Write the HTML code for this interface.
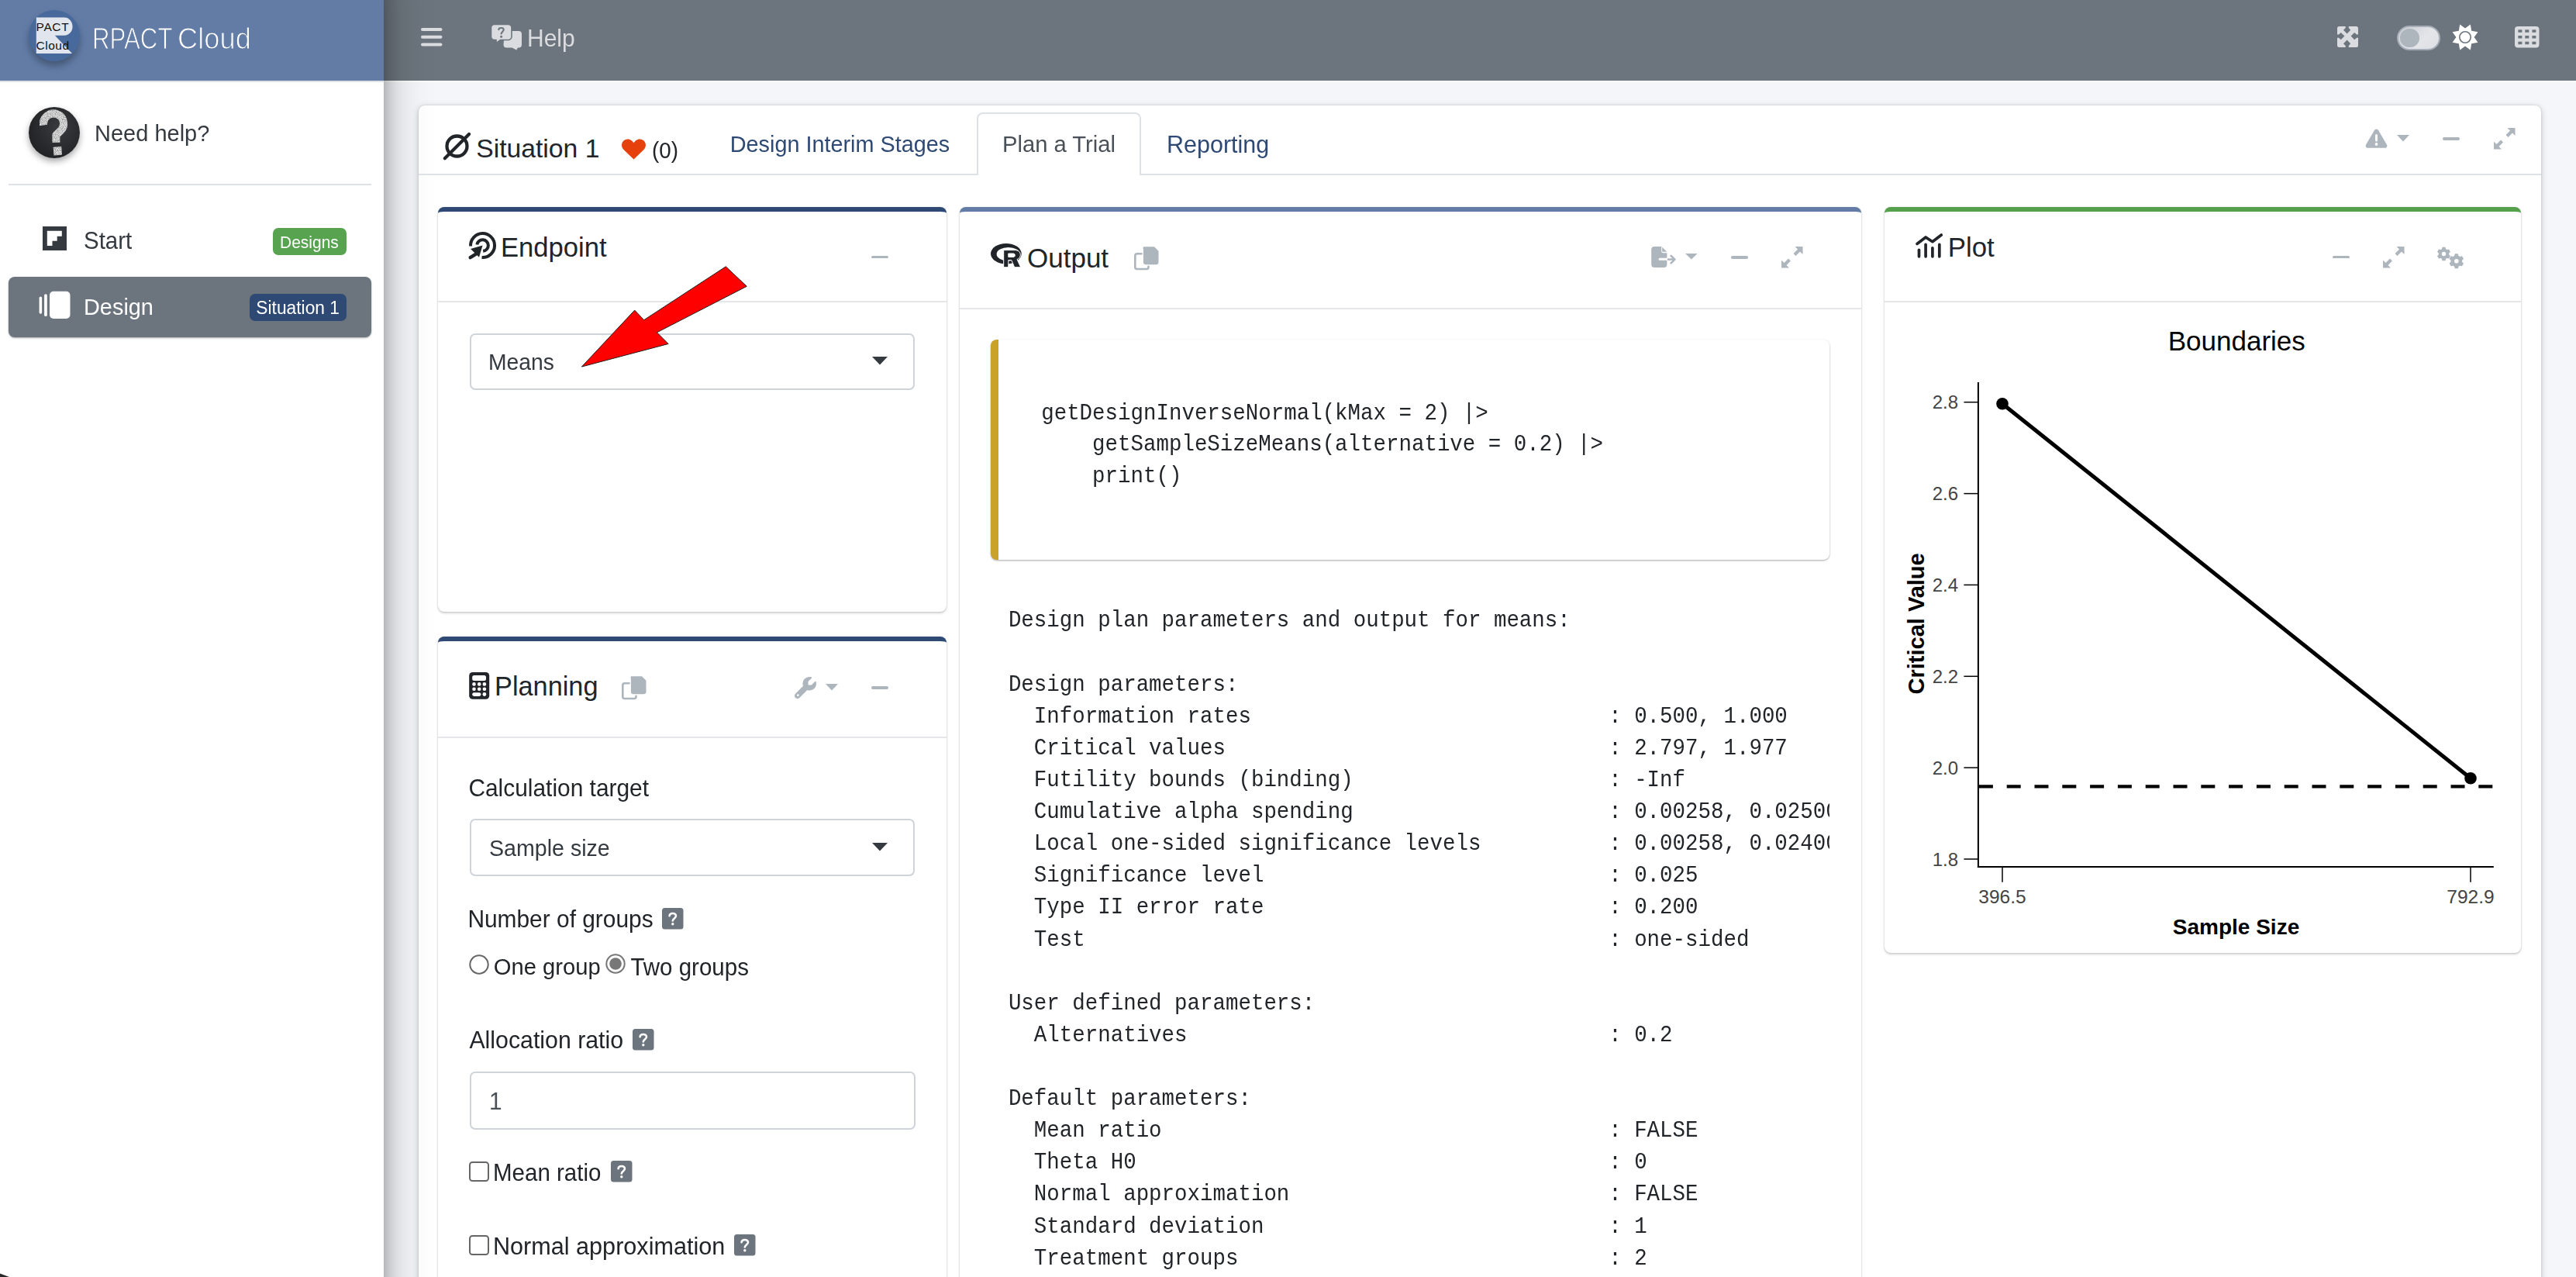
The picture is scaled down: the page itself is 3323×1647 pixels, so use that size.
<!DOCTYPE html>
<html><head><meta charset="utf-8"><title>RPACT Cloud</title>
<style>
html,body{margin:0;padding:0;width:3323px;height:1647px;overflow:hidden;background:#f4f6f9}
body{position:relative;font-family:"Liberation Sans", sans-serif}
.t{position:absolute;white-space:nowrap}
.r{position:absolute}
.s{position:absolute;overflow:visible}
</style></head><body>
<div class="r" style="left:0px;top:0px;width:3323px;height:1647px;background:#f4f6f9"></div>
<div class="r" style="left:495px;top:0px;width:2828px;height:104px;background:#6c757d"></div>
<div class="r" style="left:495px;top:104px;width:2828px;height:2px;background:#fbfbfc"></div>
<div class="r" style="left:540px;top:136px;width:2738px;height:1600px;background:#fff;border-radius:8px;box-shadow:0 0 2px rgba(0,0,0,.16),0 2px 8px rgba(0,0,0,.22)"></div>
<div class="r" style="left:0px;top:-60px;width:495px;height:1767px;background:#fff;box-shadow:0 28px 56px rgba(0,0,0,.3),0 20px 20px rgba(0,0,0,.24)"></div>
<div class="r" style="left:0px;top:0px;width:495px;height:104px;background:#627ca6"></div>
<div class="r" style="left:0px;top:104px;width:495px;height:2px;background:#dfe3e8"></div>
<div class="r" style="left:37px;top:13px;width:66px;height:66px;border-radius:50%;background:#48699b;box-shadow:0 6px 10px rgba(0,0,0,.3)"></div>
<svg class="s" style="left:37px;top:13px;" width="66" height="66" viewBox="0 0 66 66"><path d="M9.8 9.6 H46 A10.5 11.5 0 0 1 46 32.7 H33.8 L56 56.1 H9.8 Z" fill="#e1e5ee"/><text x="9.6" y="27.2" font-family="Liberation Sans" font-size="15.5" fill="#111" textLength="42">PACT</text><text x="9.6" y="50.6" font-family="Liberation Sans" font-size="15.5" fill="#111" textLength="42.5">Cloud</text></svg>
<div class="t" style="left:118.6px;top:35.1px;font-size:33px;line-height:33px;color:#ffffff;font-weight:normal;transform:scale(0.946,1.18);transform-origin:0 27.9px;-webkit-text-stroke:0.9px #627ca6;">RPACT</div>
<div class="t" style="left:229.2px;top:35.1px;font-size:33px;line-height:33px;color:#ffffff;font-weight:normal;transform:scale(1.1,1.18);transform-origin:0 27.9px;-webkit-text-stroke:0.9px #627ca6;">Cloud</div>
<div class="r" style="left:37px;top:138px;width:66px;height:66px;border-radius:50%;background:radial-gradient(circle at 60% 40%,#3a3b3e,#232426 70%);box-shadow:0 4px 8px rgba(0,0,0,.35)"></div>
<svg class="s" style="left:37px;top:138px;" width="66" height="66" viewBox="0 0 66 66"><defs><filter id="chalk" filterUnits="userSpaceOnUse" x="0" y="0" width="66" height="66"><feTurbulence type="fractalNoise" baseFrequency="0.9" numOctaves="2" seed="3" result="n"/><feColorMatrix in="n" type="matrix" values="0 0 0 0 0  0 0 0 0 0  0 0 0 0 0  0 0 0 -1.1 1.4" result="a"/><feComposite in="SourceGraphic" in2="a" operator="in"/></filter></defs><g filter="url(#chalk)"><path d="M19.2 23.5 A13 13 0 1 1 40.4 31.4 L35.4 36.2 V45.7" fill="none" stroke="#e2e2e2" stroke-width="10" stroke-linejoin="round"/><rect x="32" y="51.3" width="10.6" height="10.9" fill="#e2e2e2" transform="rotate(-4 37 56.7)"/></g></svg>
<div class="t" style="left:122.0px;top:157.9px;font-size:29px;line-height:29px;color:#343a40;font-weight:normal;transform:scaleY(1.04);transform-origin:0 24.55px;">Need help?</div>
<div class="r" style="left:11px;top:237px;width:468px;height:2px;background:#dee2e6"></div>
<svg class="s" style="left:55px;top:292px;" width="31" height="31" viewBox="0 0 31 31"><rect width="31" height="31" fill="#343a40"/><path d="M5.8 5.7 H24.8 V12.7 H18.7 V18.8 H12.5 V25 H5.8 Z" fill="#fff"/></svg>
<div class="t" style="left:108.0px;top:296.0px;font-size:29.5px;line-height:29.5px;color:#343a40;font-weight:normal;transform:scaleY(1.04);transform-origin:0 24.98px;">Start</div>
<div class="r" style="left:352px;top:294px;width:95px;height:35px;background:#57a350;border-radius:7px"></div>
<div class="t" style="left:361.0px;top:302.2px;font-size:21px;line-height:21px;color:#fff;font-weight:normal;transform:scaleY(1.04);transform-origin:0 17.78px;">Designs</div>
<div class="r" style="left:11px;top:357px;width:468px;height:78px;background:#6c757d;border-radius:8px;box-shadow:0 1px 3px rgba(0,0,0,.12),0 1px 2px rgba(0,0,0,.24)"></div>
<svg class="s" style="left:50px;top:375px;" width="41" height="37" viewBox="0 0 41 37"><rect x="0.6" y="7.4" width="3.5" height="22.4" rx="1.75" fill="#fff"/><rect x="7.1" y="4.2" width="3.7" height="28.8" rx="1.85" fill="#fff"/><rect x="14" y="0.8" width="26.5" height="35.2" rx="5" fill="#fff"/></svg>
<div class="t" style="left:108.0px;top:381.5px;font-size:28.9px;line-height:28.9px;color:#fff;font-weight:normal;transform:scaleY(1.04);transform-origin:0 24.47px;">Design</div>
<div class="r" style="left:322px;top:379px;width:125px;height:35px;background:#2e4a74;border-radius:7px"></div>
<div class="t" style="left:330.3px;top:385.7px;font-size:22.8px;line-height:22.8px;color:#fff;font-weight:normal;transform:scaleY(1.04);transform-origin:0 19.30px;">Situation 1</div>
<svg class="s" style="left:543px;top:36px;" width="28" height="24" viewBox="0 0 28 24"><rect x="0" y="0" width="27.5" height="4" rx="2" fill="#dadcdf"/><rect x="0" y="9.7" width="27.5" height="4" rx="2" fill="#dadcdf"/><rect x="0" y="19.6" width="27.5" height="4" rx="2" fill="#dadcdf"/></svg>
<svg class="s" style="left:632px;top:30px;" width="44" height="36" viewBox="0 0 44 36"><path d="M19 10 H37 A4 4 0 0 1 41 14 V27.5 A4 4 0 0 1 37 31.5 H36 L34.2 34.5 L28.5 31.5 H21.5 A4 4 0 0 1 17.5 27.5 Z" fill="#dadcdf"/><path d="M6 1.5 H23.5 A4.5 4.5 0 0 1 28 6 V17 A4.5 4.5 0 0 1 23.5 21.5 H13.5 L8 25.7 L8 21.5 H6 A4.5 4.5 0 0 1 1.5 17 V6 A4.5 4.5 0 0 1 6 1.5 Z" fill="#dadcdf" stroke="#6c757d" stroke-width="1.6"/><path d="M11.3 8.2 C11.5 5.5 17.5 5 17.7 8.3 C17.8 10.5 15 10.8 14.6 13.5" fill="none" stroke="#6c757d" stroke-width="2.1" stroke-linecap="round"/><circle cx="14.6" cy="17.3" r="1.5" fill="#6c757d"/></svg>
<div class="t" style="left:680.0px;top:34.6px;font-size:30px;line-height:30px;color:#dadcdf;font-weight:normal;transform:scaleY(1.04);transform-origin:0 25.40px;">Help</div>
<svg class="s" style="left:3014px;top:33px;" width="29" height="29" viewBox="0 0 29 29"><path d="M1 3 A2.5 2.5 0 0 1 3.5 0.9 H11.7 V2.9 L9 5.7 L13.6 10.5 L18.2 5.7 L15.8 2.9 V0.9 H25.5 A2.5 2.5 0 0 1 28 3.4 V11.6 H26 L23.2 9 L18.6 13.6 L23.2 18.2 L26 15.8 H28 V25.5 A2.5 2.5 0 0 1 25.5 28 H15.8 V26 L18.2 23.2 L13.6 18.6 L9 23.2 L11.7 26 V28 H3.5 A2.5 2.5 0 0 1 1 25.5 V15.8 H3 L5.7 18.2 L10.5 13.6 L5.7 9 L3 11.6 H1 Z" fill="#dadcdf"/></svg>
<div class="r" style="left:3092px;top:33px;width:52px;height:28px;border-radius:16px;border:2px solid #a7aeb8;background:linear-gradient(135deg,#c9ccd1,#e3e5e9 60%,#dcdfe3)"></div>
<div class="r" style="left:3096px;top:36.5px;width:24.5px;height:24.5px;border-radius:50%;background:#adb5bd"></div>
<svg class="s" style="left:3163.5px;top:31.5px;" width="32" height="32" viewBox="0 0 32 32"><polygon points="22.81,-0.45 24.20,7.80 32.45,9.19 27.60,16.00 32.45,22.81 24.20,24.20 22.81,32.45 16.00,27.60 9.19,32.45 7.80,24.20 -0.45,22.81 4.40,16.00 -0.45,9.19 7.80,7.80 9.19,-0.45 16.00,4.40" fill="#fff"/><circle cx="16" cy="16" r="7.2" fill="#fff" stroke="#6c757d" stroke-width="1.6"/></svg>
<svg class="s" style="left:3244px;top:34px;" width="31.5" height="27.5" viewBox="0 0 31.5 27.5"><rect width="31.5" height="27.5" rx="4" fill="#dadcdf"/><rect x="4.4" y="4.3" width="5" height="3.5" fill="#6c757d"/><rect x="4.4" y="12" width="5" height="3.5" fill="#6c757d"/><rect x="4.4" y="19.7" width="5" height="3.5" fill="#6c757d"/><rect x="13.3" y="4.3" width="5" height="3.5" fill="#6c757d"/><rect x="13.3" y="12" width="5" height="3.5" fill="#6c757d"/><rect x="13.3" y="19.7" width="5" height="3.5" fill="#6c757d"/><rect x="22.4" y="4.3" width="5" height="3.5" fill="#6c757d"/><rect x="22.4" y="12" width="5" height="3.5" fill="#6c757d"/><rect x="22.4" y="19.7" width="5" height="3.5" fill="#6c757d"/></svg>
<div class="r" style="left:540px;top:224px;width:2738px;height:2px;background:#dee2e6"></div>
<svg class="s" style="left:570px;top:169px;" width="40" height="40" viewBox="0 0 40 40"><circle cx="19.5" cy="19.5" r="13" fill="none" stroke="#212529" stroke-width="4.3"/><line x1="3.8" y1="35.2" x2="35.1" y2="3.9" stroke="#212529" stroke-width="4.2" stroke-linecap="round"/></svg>
<div class="t" style="left:614.2px;top:174.5px;font-size:33.7px;line-height:33.7px;color:#212529;font-weight:normal;">Situation 1</div>
<svg class="s" style="left:801px;top:178px;" width="33" height="29" viewBox="0 0 33 29"><path d="M16.5 27.5 L3.5 15 C-1.5 10 1.5 1.5 8.5 1.5 C12.5 1.5 15 4 16.5 6.5 C18 4 20.5 1.5 24.5 1.5 C31.5 1.5 34.5 10 29.5 15 Z" fill="#e6400d"/></svg>
<div class="t" style="left:841.0px;top:180.5px;font-size:27.8px;line-height:27.8px;color:#212529;font-weight:normal;transform:scaleY(1.04);transform-origin:0 23.54px;">(0)</div>
<div class="t" style="left:941.8px;top:171.6px;font-size:28.8px;line-height:28.8px;color:#2e4a74;font-weight:normal;transform:scaleY(1.04);transform-origin:0 24.38px;">Design Interim Stages</div>
<div class="r" style="left:1259.5px;top:144.5px;width:212px;height:81.5px;box-sizing:border-box;border:2px solid #dee2e6;border-bottom:none;border-radius:8px 8px 0 0;background:#fff"></div>
<div class="t" style="left:1293.0px;top:172.3px;font-size:29.2px;line-height:29.2px;color:#495057;font-weight:normal;transform:scaleY(1.04);transform-origin:0 24.72px;">Plan a Trial</div>
<div class="t" style="left:1505.0px;top:171.2px;font-size:30.5px;line-height:30.5px;color:#2e4a74;font-weight:normal;transform:scaleY(1.04);transform-origin:0 25.82px;">Reporting</div>
<svg class="s" style="left:3051px;top:165px;" width="29" height="27" viewBox="0 0 29 27"><path d="M14.5 1.5 C15.7 1.5 16.5 2.2 17.2 3.3 L28 21.8 C29 23.7 27.8 25.8 25.6 25.8 H3.4 C1.2 25.8 0 23.7 1 21.8 L11.8 3.3 C12.5 2.2 13.3 1.5 14.5 1.5 Z" fill="#adb5bd"/><rect x="13" y="8" width="3" height="9.5" rx="1.5" fill="#fff"/><circle cx="14.5" cy="21" r="1.9" fill="#fff"/></svg>
<svg class="s" style="left:3092px;top:173.5px;" width="16" height="8.5" viewBox="0 0 16 8.5"><path d="M0 0 H16 L8.0 8.5 Z" fill="#adb5bd"/></svg>
<div class="r" style="left:3151px;top:177px;width:22px;height:3.5px;background:#adb5bd;border-radius:2px"></div>
<svg class="s" style="left:3217px;top:165px;" width="28" height="28" viewBox="0 0 28 28"><path d="M17.5 0 H27.5 V10 L24 6.5 L18.5 12 L15.5 9 L21 3.5 Z M10 27.5 H0 V17.5 L3.5 21 L9 15.5 L12 18.5 L6.5 24 Z" fill="#adb5bd"/></svg>
<div class="r" style="left:565px;top:267px;width:656px;height:522px;background:#fff;border-radius:8px;border-top:6px solid #2e4a74;box-sizing:border-box;box-shadow:0 0 2px rgba(0,0,0,.16),0 2px 3px rgba(0,0,0,.18)"></div>
<div class="r" style="left:565px;top:388px;width:656px;height:2px;background:#e4e6e9"></div>
<svg class="s" style="left:598px;top:292px;" width="40" height="40" viewBox="0 0 40 40"><g fill="none" stroke="#212529" stroke-width="4"><path d="M23.55 40.02 A15.5 15.5 0 1 0 9.08 25.5"/><path d="M25.15 31.83 A7.3 7.3 0 1 0 17.33 23.46"/></g><path d="M24.55 24.55 L9.05 29.1 L20 39.7 Z" fill="#212529"/><line x1="16.8" y1="35.1" x2="8.7" y2="40.1" stroke="#212529" stroke-width="4.5" stroke-linecap="round"/></svg>
<div class="t" style="left:646.0px;top:301.7px;font-size:34.6px;line-height:34.6px;color:#212529;font-weight:normal;">Endpoint</div>
<div class="r" style="left:1124px;top:330px;width:22px;height:3px;background:#adb5bd;border-radius:2px"></div>
<div class="r" style="left:605.5px;top:429.5px;width:574.5px;height:73.5px;border:2px solid #ced4da;border-radius:7px;box-sizing:border-box;background:#fff"></div>
<div class="t" style="left:630.0px;top:453.0px;font-size:28.3px;line-height:28.3px;color:#343a40;font-weight:normal;transform:scaleY(1.04);transform-origin:0 23.96px;">Means</div>
<svg class="s" style="left:1125px;top:460.4px;" width="20" height="10.6" viewBox="0 0 20 10.6"><path d="M0 0 H20 L10.0 10.6 Z" fill="#343a40"/></svg>
<div class="r" style="left:565px;top:821px;width:656px;height:1000px;background:#fff;border-radius:8px;border-top:6px solid #2e4a74;box-sizing:border-box;box-shadow:0 0 2px rgba(0,0,0,.16),0 2px 3px rgba(0,0,0,.18)"></div>
<div class="r" style="left:565px;top:950px;width:656px;height:2px;background:#e4e6e9"></div>
<svg class="s" style="left:605px;top:867px;" width="27" height="35" viewBox="0 0 27 35"><rect x="0.2" y="0" width="26" height="34.8" rx="4.5" fill="#212529"/><rect x="4.2" y="4" width="17.8" height="7" rx="2.5" fill="#fff"/><g fill="#fff"><circle cx="6.5" cy="15.4" r="2.3"/><circle cx="13.2" cy="15.4" r="2.3"/><circle cx="19.9" cy="15.4" r="2.3"/><circle cx="6.5" cy="21.8" r="2.3"/><circle cx="13.2" cy="21.8" r="2.3"/><circle cx="19.9" cy="21.8" r="2.3"/><rect x="4.2" y="26.2" width="11.3" height="4.8" rx="2.4"/><circle cx="19.9" cy="28.5" r="2.4"/></g></svg>
<div class="t" style="left:638.0px;top:867.5px;font-size:34.3px;line-height:34.3px;color:#212529;font-weight:normal;">Planning</div>
<svg class="s" style="left:802px;top:872px;" width="32" height="32" viewBox="0 0 32 32"><path d="M12 0.2 H26 L31.5 5.8 V20 A3.3 3.3 0 0 1 28.2 23.3 H15.2 A3.3 3.3 0 0 1 11.9 20 V3.5 A3.3 3.3 0 0 1 12 0.2 Z" fill="#adb5bd"/><path d="M9.5 9.3 H3.8 A2.5 2.5 0 0 0 1.3 11.8 V26.5 A2.5 2.5 0 0 0 3.8 29 H16 A2.5 2.5 0 0 0 18.5 26.5 V25.8" fill="none" stroke="#adb5bd" stroke-width="2.6" stroke-linecap="round"/></svg>
<svg class="s" style="left:1025px;top:873px;" width="28" height="28" viewBox="0 0 512 512"><path d="M352 320c88.4 0 160-71.6 160-160c0-15.3-2.2-30.1-6.2-44.2c-3.1-10.8-16.4-13.2-24.3-5.3l-76.8 76.8c-3 3-7.1 4.7-11.3 4.7H336c-8.8 0-16-7.2-16-16V118.6c0-4.2 1.7-8.3 4.7-11.3l76.8-76.8c7.9-7.9 5.4-21.2-5.3-24.3C382.1 2.2 367.3 0 352 0C263.6 0 192 71.6 192 160c0 19.1 3.4 37.5 9.5 54.5L19.9 396.1C7.2 408.8 0 426.1 0 444.1C0 481.6 30.4 512 67.9 512c18 0 35.3-7.2 48-19.9L297.5 310.5c17 6.2 35.4 9.5 54.5 9.5zM80 408a24 24 0 1 1 0 48 24 24 0 1 1 0-48z" fill="#adb5bd"/></svg>
<svg class="s" style="left:1065px;top:881.5px;" width="16" height="8.5" viewBox="0 0 16 8.5"><path d="M0 0 H16 L8.0 8.5 Z" fill="#adb5bd"/></svg>
<div class="r" style="left:1124px;top:885px;width:22px;height:3.5px;background:#adb5bd;border-radius:2px"></div>
<div class="t" style="left:604.4px;top:1002.2px;font-size:29.9px;line-height:29.9px;color:#212529;font-weight:normal;transform:scaleY(1.04);transform-origin:0 25.32px;">Calculation target</div>
<div class="r" style="left:605.5px;top:1055.5px;width:574.5px;height:74px;border:2px solid #ced4da;border-radius:7px;box-sizing:border-box;background:#fff"></div>
<div class="t" style="left:631.0px;top:1079.8px;font-size:28.6px;line-height:28.6px;color:#343a40;font-weight:normal;transform:scaleY(1.04);transform-origin:0 24.22px;">Sample size</div>
<svg class="s" style="left:1125px;top:1086.8px;" width="20" height="10.5" viewBox="0 0 20 10.5"><path d="M0 0 H20 L10.0 10.5 Z" fill="#343a40"/></svg>
<div class="t" style="left:603.4px;top:1170.9px;font-size:29.9px;line-height:29.9px;color:#212529;font-weight:normal;transform:scaleY(1.04);transform-origin:0 25.32px;">Number of groups</div>
<svg class="s" style="left:854px;top:1171px;" width="27.5" height="27.5" viewBox="0 0 27.5 27.5"><rect width="27.5" height="27.5" rx="3.5" fill="#6c757d"/><path d="M9.6 10.2 C9.8 6.2 18 5.8 18 10.3 C18 13.2 14 13.6 13.8 16.5" fill="none" stroke="#fff" stroke-width="2.6" stroke-linecap="round"/><circle cx="13.8" cy="20.8" r="1.7" fill="#fff"/></svg>
<svg class="s" style="left:605px;top:1231px;" width="26" height="26" viewBox="0 0 26 26"><circle cx="13" cy="13" r="11.7" fill="#fff" stroke="#666" stroke-width="2"/></svg>
<div class="t" style="left:636.8px;top:1233.2px;font-size:29.2px;line-height:29.2px;color:#212529;font-weight:normal;transform:scaleY(1.04);transform-origin:0 24.72px;">One group</div>
<svg class="s" style="left:781px;top:1230px;" width="26" height="26" viewBox="0 0 26 26"><circle cx="13" cy="13" r="11.7" fill="#fff" stroke="#777" stroke-width="2"/><circle cx="13" cy="13" r="7.8" fill="#777"/></svg>
<div class="t" style="left:813.4px;top:1232.9px;font-size:29.5px;line-height:29.5px;color:#212529;font-weight:normal;transform:scaleY(1.04);transform-origin:0 24.98px;">Two groups</div>
<div class="t" style="left:605.4px;top:1326.7px;font-size:30.3px;line-height:30.3px;color:#212529;font-weight:normal;transform:scaleY(1.04);transform-origin:0 25.66px;">Allocation ratio</div>
<svg class="s" style="left:816px;top:1327px;" width="27.5" height="27.5" viewBox="0 0 27.5 27.5"><rect width="27.5" height="27.5" rx="3.5" fill="#6c757d"/><path d="M9.6 10.2 C9.8 6.2 18 5.8 18 10.3 C18 13.2 14 13.6 13.8 16.5" fill="none" stroke="#fff" stroke-width="2.6" stroke-linecap="round"/><circle cx="13.8" cy="20.8" r="1.7" fill="#fff"/></svg>
<div class="r" style="left:605.5px;top:1381.5px;width:575px;height:75px;border:2px solid #ced4da;border-radius:7px;box-sizing:border-box;background:#fff"></div>
<div class="t" style="left:631.0px;top:1405.6px;font-size:29.8px;line-height:29.8px;color:#495057;font-weight:normal;transform:scaleY(1.04);transform-origin:0 25.23px;">1</div>
<svg class="s" style="left:605px;top:1497.5px;" width="26" height="26" viewBox="0 0 26 26"><rect x="1" y="1" width="24" height="24" rx="3.5" fill="#fff" stroke="#666" stroke-width="2"/></svg>
<div class="t" style="left:636.0px;top:1498.0px;font-size:29.5px;line-height:29.5px;color:#212529;font-weight:normal;transform:scaleY(1.04);transform-origin:0 24.98px;">Mean ratio</div>
<svg class="s" style="left:788px;top:1497px;" width="27.5" height="27.5" viewBox="0 0 27.5 27.5"><rect width="27.5" height="27.5" rx="3.5" fill="#6c757d"/><path d="M9.6 10.2 C9.8 6.2 18 5.8 18 10.3 C18 13.2 14 13.6 13.8 16.5" fill="none" stroke="#fff" stroke-width="2.6" stroke-linecap="round"/><circle cx="13.8" cy="20.8" r="1.7" fill="#fff"/></svg>
<svg class="s" style="left:605px;top:1592.5px;" width="26" height="26" viewBox="0 0 26 26"><rect x="1" y="1" width="24" height="24" rx="3.5" fill="#fff" stroke="#666" stroke-width="2"/></svg>
<div class="t" style="left:636.0px;top:1592.1px;font-size:30.6px;line-height:30.6px;color:#212529;font-weight:normal;transform:scaleY(1.04);transform-origin:0 25.91px;">Normal approximation</div>
<svg class="s" style="left:947px;top:1592px;" width="27.5" height="27.5" viewBox="0 0 27.5 27.5"><rect width="27.5" height="27.5" rx="3.5" fill="#6c757d"/><path d="M9.6 10.2 C9.8 6.2 18 5.8 18 10.3 C18 13.2 14 13.6 13.8 16.5" fill="none" stroke="#fff" stroke-width="2.6" stroke-linecap="round"/><circle cx="13.8" cy="20.8" r="1.7" fill="#fff"/></svg>
<svg class="s" style="left:740px;top:335px;" width="240" height="150" viewBox="0 0 240 150"><polygon points="10.4,138 122.1,108.5 107.4,93.8 223.3,34.3 196.3,8.8 90.7,77.7 78.7,65.1" fill="#ff0000" stroke="#222" stroke-width="1"/></svg>
<div class="r" style="left:1238px;top:267px;width:1163px;height:1500px;background:#fff;border-radius:8px;border-top:6px solid #627ca6;box-sizing:border-box;box-shadow:0 0 2px rgba(0,0,0,.16),0 2px 3px rgba(0,0,0,.18)"></div>
<div class="r" style="left:1238px;top:397px;width:1163px;height:2px;background:#e4e6e9"></div>
<svg class="s" style="left:1277px;top:313px;" width="42" height="33" viewBox="0 0 42 33"><path fill-rule="evenodd" d="M1 14.2 A19.85 13.2 0 1 0 40.7 14.2 A19.85 13.2 0 1 0 1 14.2 Z M8.6 14.8 A15.15 8.8 0 1 0 38.9 14.8 A15.15 8.8 0 1 0 8.6 14.8 Z" fill="#212529"/><path d="M17.7 9.6 H32 C36.5 9.6 39.3 11.8 39.3 15.8 C39.3 18.7 37.5 20.6 35 21.5 L39.7 31.7 H31.7 L27.8 22.6 H23.8 V31.7 H17.7 Z M23.8 14 V18.5 H29.8 C31.4 18.5 32.3 17.6 32.3 16.2 C32.3 14.8 31.4 14 29.8 14 Z" fill="#212529" stroke="#fff" stroke-width="1"/></svg>
<div class="t" style="left:1325.0px;top:315.4px;font-size:35px;line-height:35px;color:#212529;font-weight:normal;">Output</div>
<svg class="s" style="left:1463px;top:318px;" width="32" height="32" viewBox="0 0 32 32"><path d="M12 0.2 H26 L31.5 5.8 V20 A3.3 3.3 0 0 1 28.2 23.3 H15.2 A3.3 3.3 0 0 1 11.9 20 V3.5 A3.3 3.3 0 0 1 12 0.2 Z" fill="#adb5bd"/><path d="M9.5 9.3 H3.8 A2.5 2.5 0 0 0 1.3 11.8 V26.5 A2.5 2.5 0 0 0 3.8 29 H16 A2.5 2.5 0 0 0 18.5 26.5 V25.8" fill="none" stroke="#adb5bd" stroke-width="2.6" stroke-linecap="round"/></svg>
<svg class="s" style="left:2130px;top:318px;" width="34" height="28" viewBox="0 0 34 28"><path d="M0.2 4 A4 4 0 0 1 4.2 0 H13.2 V6 A2.2 2.2 0 0 0 15.4 8.2 H20.4 V14.8 H11 A1.5 1.5 0 0 0 11 17.8 H20.4 V23 A4 4 0 0 1 16.4 27 H4.2 A4 4 0 0 1 0.2 23 Z M14.2 0.8 L20.2 6.8 H14.2 Z" fill="#adb5bd"/><rect x="21" y="15.3" width="8" height="2.5" fill="#adb5bd"/><polyline points="25.6,11.8 30.4,16.55 25.6,21.3" fill="none" stroke="#adb5bd" stroke-width="2.6" stroke-linecap="round" stroke-linejoin="round"/></svg>
<svg class="s" style="left:2174px;top:327px;" width="15.6" height="7.6" viewBox="0 0 15.6 7.6"><path d="M0 0 H15.6 L7.8 7.6 Z" fill="#adb5bd"/></svg>
<div class="r" style="left:2233px;top:330px;width:22px;height:3.5px;background:#adb5bd;border-radius:2px"></div>
<svg class="s" style="left:2298px;top:318px;" width="28" height="28" viewBox="0 0 28 28"><path d="M17.5 0 H27.5 V10 L24 6.5 L18.5 12 L15.5 9 L21 3.5 Z M10 27.5 H0 V17.5 L3.5 21 L9 15.5 L12 18.5 L6.5 24 Z" fill="#adb5bd"/></svg>
<div class="r" style="left:1278px;top:438px;width:1082px;height:284px;background:#fff;border-radius:8px;border-left:10px solid #c9a227;box-sizing:border-box;box-shadow:0 1px 3px rgba(0,0,0,.12),0 1px 2px rgba(0,0,0,.24)"></div>
<div class="t" style="left:1343.2px;top:519.6px;font-size:27.46px;line-height:27.46px;color:#212529;font-weight:normal;font-family:'Liberation Mono', monospace;white-space:pre;transform:scaleY(1.08);transform-origin:0 21.04px;">getDesignInverseNormal(kMax = 2) |&gt;</div>
<div class="t" style="left:1343.2px;top:560.4px;font-size:27.46px;line-height:27.46px;color:#212529;font-weight:normal;font-family:'Liberation Mono', monospace;white-space:pre;transform:scaleY(1.08);transform-origin:0 21.04px;">    getSampleSizeMeans(alternative = 0.2) |&gt;</div>
<div class="t" style="left:1343.2px;top:601.2px;font-size:27.46px;line-height:27.46px;color:#212529;font-weight:normal;font-family:'Liberation Mono', monospace;white-space:pre;transform:scaleY(1.08);transform-origin:0 21.04px;">    print()</div>
<div class="r" style="left:1238px;top:740px;width:1122px;height:907px;overflow:hidden">
<div class="t" style="left:62.9px;top:47.3px;font-size:27.46px;line-height:27.46px;color:#212529;font-family:'Liberation Mono', monospace;white-space:pre;transform:scaleY(1.08);transform-origin:0 21.04px">Design plan parameters and output for means:</div>
<div class="t" style="left:62.9px;top:129.5px;font-size:27.46px;line-height:27.46px;color:#212529;font-family:'Liberation Mono', monospace;white-space:pre;transform:scaleY(1.08);transform-origin:0 21.04px">Design parameters:</div>
<div class="t" style="left:62.9px;top:170.6px;font-size:27.46px;line-height:27.46px;color:#212529;font-family:'Liberation Mono', monospace;white-space:pre;transform:scaleY(1.08);transform-origin:0 21.04px">  Information rates                            : 0.500, 1.000</div>
<div class="t" style="left:62.9px;top:211.7px;font-size:27.46px;line-height:27.46px;color:#212529;font-family:'Liberation Mono', monospace;white-space:pre;transform:scaleY(1.08);transform-origin:0 21.04px">  Critical values                              : 2.797, 1.977</div>
<div class="t" style="left:62.9px;top:252.9px;font-size:27.46px;line-height:27.46px;color:#212529;font-family:'Liberation Mono', monospace;white-space:pre;transform:scaleY(1.08);transform-origin:0 21.04px">  Futility bounds (binding)                    : -Inf</div>
<div class="t" style="left:62.9px;top:294.0px;font-size:27.46px;line-height:27.46px;color:#212529;font-family:'Liberation Mono', monospace;white-space:pre;transform:scaleY(1.08);transform-origin:0 21.04px">  Cumulative alpha spending                    : 0.00258, 0.02500</div>
<div class="t" style="left:62.9px;top:335.1px;font-size:27.46px;line-height:27.46px;color:#212529;font-family:'Liberation Mono', monospace;white-space:pre;transform:scaleY(1.08);transform-origin:0 21.04px">  Local one-sided significance levels          : 0.00258, 0.02400</div>
<div class="t" style="left:62.9px;top:376.2px;font-size:27.46px;line-height:27.46px;color:#212529;font-family:'Liberation Mono', monospace;white-space:pre;transform:scaleY(1.08);transform-origin:0 21.04px">  Significance level                           : 0.025</div>
<div class="t" style="left:62.9px;top:417.3px;font-size:27.46px;line-height:27.46px;color:#212529;font-family:'Liberation Mono', monospace;white-space:pre;transform:scaleY(1.08);transform-origin:0 21.04px">  Type II error rate                           : 0.200</div>
<div class="t" style="left:62.9px;top:458.5px;font-size:27.46px;line-height:27.46px;color:#212529;font-family:'Liberation Mono', monospace;white-space:pre;transform:scaleY(1.08);transform-origin:0 21.04px">  Test                                         : one-sided</div>
<div class="t" style="left:62.9px;top:540.7px;font-size:27.46px;line-height:27.46px;color:#212529;font-family:'Liberation Mono', monospace;white-space:pre;transform:scaleY(1.08);transform-origin:0 21.04px">User defined parameters:</div>
<div class="t" style="left:62.9px;top:581.8px;font-size:27.46px;line-height:27.46px;color:#212529;font-family:'Liberation Mono', monospace;white-space:pre;transform:scaleY(1.08);transform-origin:0 21.04px">  Alternatives                                 : 0.2</div>
<div class="t" style="left:62.9px;top:664.1px;font-size:27.46px;line-height:27.46px;color:#212529;font-family:'Liberation Mono', monospace;white-space:pre;transform:scaleY(1.08);transform-origin:0 21.04px">Default parameters:</div>
<div class="t" style="left:62.9px;top:705.2px;font-size:27.46px;line-height:27.46px;color:#212529;font-family:'Liberation Mono', monospace;white-space:pre;transform:scaleY(1.08);transform-origin:0 21.04px">  Mean ratio                                   : FALSE</div>
<div class="t" style="left:62.9px;top:746.3px;font-size:27.46px;line-height:27.46px;color:#212529;font-family:'Liberation Mono', monospace;white-space:pre;transform:scaleY(1.08);transform-origin:0 21.04px">  Theta H0                                     : 0</div>
<div class="t" style="left:62.9px;top:787.4px;font-size:27.46px;line-height:27.46px;color:#212529;font-family:'Liberation Mono', monospace;white-space:pre;transform:scaleY(1.08);transform-origin:0 21.04px">  Normal approximation                         : FALSE</div>
<div class="t" style="left:62.9px;top:828.5px;font-size:27.46px;line-height:27.46px;color:#212529;font-family:'Liberation Mono', monospace;white-space:pre;transform:scaleY(1.08);transform-origin:0 21.04px">  Standard deviation                           : 1</div>
<div class="t" style="left:62.9px;top:869.7px;font-size:27.46px;line-height:27.46px;color:#212529;font-family:'Liberation Mono', monospace;white-space:pre;transform:scaleY(1.08);transform-origin:0 21.04px">  Treatment groups                             : 2</div>
</div>
<div class="r" style="left:2431px;top:267px;width:821px;height:962px;background:#fff;border-radius:8px;border-top:6px solid #55a04a;box-sizing:border-box;box-shadow:0 0 2px rgba(0,0,0,.16),0 2px 3px rgba(0,0,0,.18)"></div>
<div class="r" style="left:2431px;top:388px;width:821px;height:2px;background:#e4e6e9"></div>
<svg class="s" style="left:2469px;top:299px;" width="40" height="35" viewBox="0 0 40 35"><g fill="none" stroke="#212529" stroke-width="3.7" stroke-linecap="round" stroke-linejoin="round"><polyline points="4,15.5 15.1,7 23.9,12.7 35.3,4"/><line x1="6.5" y1="23.3" x2="6.5" y2="31.8"/><line x1="15.1" y1="16.4" x2="15.1" y2="31.8"/><line x1="23.9" y1="20.8" x2="23.9" y2="31.8"/><line x1="32.8" y1="16.4" x2="32.8" y2="31.8"/></g></svg>
<div class="t" style="left:2512.8px;top:301.5px;font-size:34.8px;line-height:34.8px;color:#212529;font-weight:normal;">Plot</div>
<div class="r" style="left:3009px;top:329.5px;width:22px;height:3.5px;background:#adb5bd;border-radius:2px"></div>
<svg class="s" style="left:3074px;top:318px;" width="28" height="28" viewBox="0 0 28 28"><path d="M17.5 0 H27.5 V10 L24 6.5 L18.5 12 L15.5 9 L21 3.5 Z M10 27.5 H0 V17.5 L3.5 21 L9 15.5 L12 18.5 L6.5 24 Z" fill="#adb5bd"/></svg>
<svg class="s" style="left:3140px;top:314px;" width="42" height="34" viewBox="0 0 42 34"><polygon points="10.66,7.48 10.94,5.45 14.06,5.45 14.34,7.48 16.80,8.89 18.69,8.12 20.25,10.83 18.64,12.08 18.64,14.92 20.25,16.17 18.69,18.88 16.80,18.11 14.34,19.52 14.06,21.55 10.94,21.55 10.66,19.52 8.20,18.11 6.31,18.88 4.75,16.17 6.36,14.92 6.36,12.08 4.75,10.83 6.31,8.12 8.20,8.89" fill="#adb5bd" stroke="#adb5bd" stroke-width="1.2" stroke-linejoin="round"/><circle cx="12.5" cy="13.5" r="2.7" fill="#fff"/><polygon points="26.78,16.20 27.08,13.97 30.52,13.97 30.82,16.20 33.51,17.75 35.59,16.90 37.31,19.87 35.52,21.25 35.52,24.35 37.31,25.73 35.59,28.70 33.51,27.85 30.82,29.40 30.52,31.63 27.08,31.63 26.78,29.40 24.09,27.85 22.01,28.70 20.29,25.73 22.08,24.35 22.08,21.25 20.29,19.87 22.01,16.90 24.09,17.75" fill="#adb5bd" stroke="#adb5bd" stroke-width="1.2" stroke-linejoin="round"/><circle cx="28.8" cy="22.8" r="2.8" fill="#fff"/></svg>
<svg class="s" style="left:2431px;top:267px;" width="821" height="962" viewBox="0 0 821 962"><text x="454.3000000000002" y="184.5" font-family="Liberation Sans" font-size="35" text-anchor="middle" fill="#000">Boundaries</text><line x1="120.90000000000009" y1="226" x2="120.90000000000009" y2="852" stroke="#000" stroke-width="2"/><line x1="119.90000000000009" y1="851" x2="785.8000000000002" y2="851" stroke="#000" stroke-width="2"/><line x1="102.40000000000009" y1="251.7" x2="120.90000000000009" y2="251.7" stroke="#000" stroke-width="1.5"/><text x="95" y="260.2" font-family="Liberation Sans" font-size="24" text-anchor="end" fill="#444">2.8</text><line x1="102.40000000000009" y1="369.6" x2="120.90000000000009" y2="369.6" stroke="#000" stroke-width="1.5"/><text x="95" y="378.1" font-family="Liberation Sans" font-size="24" text-anchor="end" fill="#444">2.6</text><line x1="102.40000000000009" y1="487.4" x2="120.90000000000009" y2="487.4" stroke="#000" stroke-width="1.5"/><text x="95" y="495.9" font-family="Liberation Sans" font-size="24" text-anchor="end" fill="#444">2.4</text><line x1="102.40000000000009" y1="605.3" x2="120.90000000000009" y2="605.3" stroke="#000" stroke-width="1.5"/><text x="95" y="613.8" font-family="Liberation Sans" font-size="24" text-anchor="end" fill="#444">2.2</text><line x1="102.40000000000009" y1="723.1" x2="120.90000000000009" y2="723.1" stroke="#000" stroke-width="1.5"/><text x="95" y="731.6" font-family="Liberation Sans" font-size="24" text-anchor="end" fill="#444">2.0</text><line x1="102.40000000000009" y1="841.0" x2="120.90000000000009" y2="841.0" stroke="#000" stroke-width="1.5"/><text x="95" y="849.5" font-family="Liberation Sans" font-size="24" text-anchor="end" fill="#444">1.8</text><line x1="152" y1="851" x2="152" y2="870.8" stroke="#000" stroke-width="1.5"/><text x="152" y="897.7" font-family="Liberation Sans" font-size="24.5" text-anchor="middle" fill="#444">396.5</text><line x1="756" y1="851" x2="756" y2="870.8" stroke="#000" stroke-width="1.5"/><text x="756" y="897.7" font-family="Liberation Sans" font-size="24.5" text-anchor="middle" fill="#444">792.9</text><text x="453.5" y="937.5" font-family="Liberation Sans" font-size="28" font-weight="bold" text-anchor="middle" fill="#000">Sample Size</text><text transform="translate(51,537.4) rotate(-90)" font-family="Liberation Sans" font-size="29" font-weight="bold" text-anchor="middle" fill="#000">Critical Value</text><line x1="121.90000000000009" y1="747.4" x2="785.8000000000002" y2="747.4" stroke="#000" stroke-width="4.3" stroke-dasharray="18 17.8"/><line x1="152" y1="253.70000000000005" x2="756" y2="736.8" stroke="#000" stroke-width="5"/><circle cx="152" cy="253.70000000000005" r="7.8" fill="#000"/><circle cx="756" cy="736.8" r="7.8" fill="#000"/></svg>
<svg class="s" style="left:0px;top:1641px;" width="12" height="6" viewBox="0 0 12 6"><path d="M0 1.5 L12 6 H0 Z" fill="#2a2a2a"/></svg>
</body></html>
